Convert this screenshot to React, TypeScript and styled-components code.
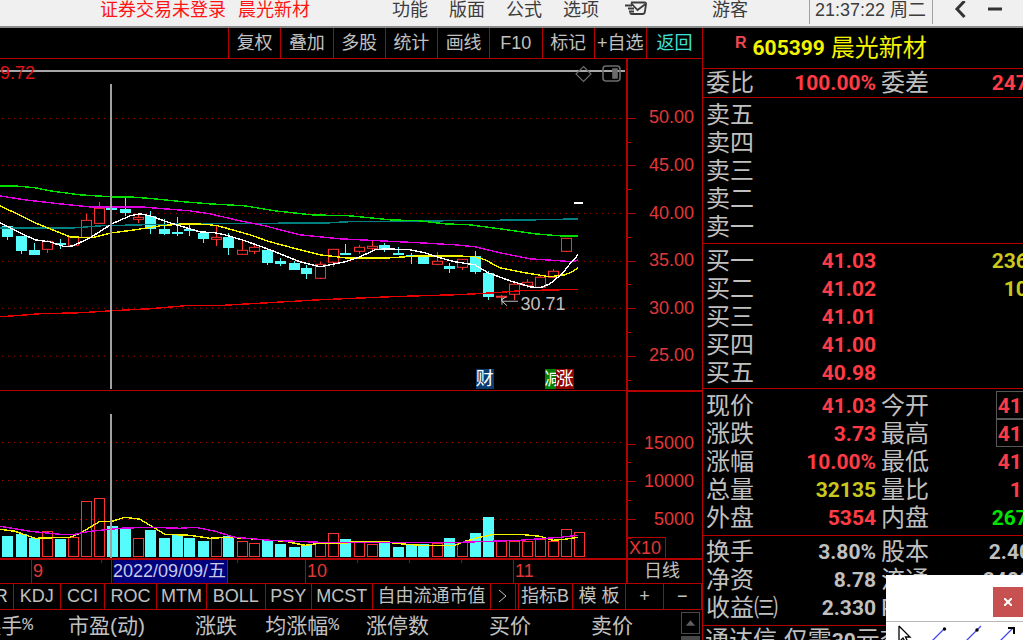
import React from 'react';
import styled, { createGlobalStyle } from 'styled-components';

const RED = '#b40000';
const CYAN = '#54fcfc';
const CANDLE = '#ff3232';
const SILVER = '#c0c0c0';

const Global = createGlobalStyle`
  *, *::before, *::after { box-sizing: border-box; }
  body {
    margin: 0;
    background: #000;
    color: ${SILVER};
    font-family: "Liberation Sans", "Noto Sans CJK SC", sans-serif;
    font-size: 18px;
  }
  button {
    font: inherit;
    color: inherit;
    background: none;
    border: 0;
    padding: 0;
    margin: 0;
    white-space: nowrap;
  }
  svg { display: block; }
`;

const Page = styled.div`
  position: relative;
  display: flex;
  flex-direction: column;
  height: 100vh;
  overflow: hidden;
`;

/* ---------- title bar ---------- */

const TitleBar = styled.header`
  display: flex;
  align-items: flex-start;
  flex: none;
  height: 28px;
  padding-left: 100px;
  background: #f0f0f0;
  border-bottom: 2px solid #8c8c8c;
  color: #3c3c3c;
  line-height: 20px;
  white-space: nowrap;
  overflow: hidden;
`;

const Status = styled.div`
  display: flex;
  flex: 1;
  gap: 12px;
  color: #ff1414;
`;

const Menu = styled.nav`
  display: flex;
  gap: 21px;
`;

const MailButton = styled.button`
  margin: 0 64px 0 26px;
  height: 18px;
`;

const Clock = styled.time`
  height: 24px;
  margin-left: 61px;
  padding: 0 6px 0 5px;
  border: solid #a0a0a0;
  border-width: 0 1px;
`;

const WindowButtons = styled.div`
  display: flex;
  gap: 20px;
  padding: 1px 20px 0 21px;
`;

/* ---------- main layout ---------- */

const Body = styled.main`
  display: grid;
  grid-template-columns: minmax(0, 1fr) 321px;
  flex: 1;
  min-height: 0;
`;

const ChartSide = styled.section`
  display: flex;
  flex-direction: column;
  min-width: 0;
  min-height: 0;
  overflow: hidden;
`;

const Toolbar = styled.div`
  display: grid;
  grid-template-columns: repeat(8, 1fr) 56px;
  flex: none;
  align-self: stretch;
  height: 31px;
  padding-left: calc(100% - 474px);
  border-bottom: 1px solid ${RED};
`;

const ToolButton = styled.button<{ $active?: boolean }>`
  border-left: 1px solid ${RED};
  line-height: 30px;
  color: ${(p) => (p.$active ? '#40e0d8' : SILVER)};
`;

const Pane = styled.div<{ $grow: number }>`
  display: grid;
  grid-template-columns: minmax(0, 1fr) 76px;
  flex: ${(p) => p.$grow} 1 0;
  min-height: 0;
  border-bottom: 1px solid ${RED};
`;

const Plot = styled.div`
  position: relative;
  min-height: 0;
  overflow: hidden;
  > svg:first-child { width: 100%; height: 100%; }
`;

const Axis = styled.div<{ $boxed?: boolean }>`
  position: relative;
  display: flex;
  flex-direction: column;
  min-height: 0;
  padding: ${(p) => (p.$boxed ? '33px 8px 20px 0' : '35px 8px 10px 0')};
  border-left: 2px solid ${RED};
  border-top: ${(p) => (p.$boxed ? `1px solid ${RED}` : '0')};
  color: #e03838;
`;

const AxisLabel = styled.div`
  position: relative;
  display: flex;
  flex: 1;
  align-items: center;
  justify-content: flex-end;
  &::before, &::after {
    content: '';
    position: absolute;
    left: 0;
    height: 1px;
    background: ${RED};
  }
  &::before { top: 50%; width: 8px; }
  &::after { top: 100%; width: 3px; }
`;

const Unit = styled.div`
  position: absolute;
  left: 0;
  bottom: 0;
  height: 21px;
  padding: 0 4px 0 1px;
  border: solid ${RED};
  border-width: 1px 1px 0 0;
  line-height: 20px;
`;

const PlotIcons = styled.div`
  position: absolute;
  top: 6px;
  right: 5px;
  display: flex;
  gap: 10px;
`;

const TopValue = styled.span`
  position: absolute;
  top: 4px;
  left: 0;
  color: #e01414;
  line-height: 20px;
`;

const LowValue = styled.span`
  position: absolute;
  left: 83%;
  top: 71%;
  padding-left: 1px;
  line-height: 20px;
`;

const Markers = styled.div<{ $left: string }>`
  position: absolute;
  left: ${(p) => p.$left};
  bottom: 1px;
  display: flex;
  color: #fff;
  line-height: 20px;
`;

const Marker = styled.span<{ $bg: string; $clipped?: boolean }>`
  width: ${(p) => (p.$clipped ? '11px' : 'auto')};
  height: 20px;
  overflow: hidden;
  background: ${(p) => p.$bg};
`;

const DateRow = styled.div`
  display: grid;
  grid-template-columns: minmax(0, 1fr) 76px;
  flex: none;
  height: 25px;
  border-top: 1px solid ${RED};
  border-bottom: 1px solid ${RED};
  line-height: 23px;
`;

const Dates = styled.div`
  position: relative;
  display: grid;
  grid-template-columns: 31fr 80fr 194fr 208fr 113fr;
  color: #e03838;
  > svg { position: absolute; top: 0; left: 0; width: 100%; height: 4px; }
`;

const DateCell = styled.div`
  padding-left: 1px;
  border-left: 1px solid ${RED};
  white-space: nowrap;
  &:first-child { border-left: 0; }
`;

const SelectedDate = styled.span`
  display: inline-block;
  padding-right: 1px;
  border-right: 1px solid ${RED};
  background: #00007c;
  color: #c8c8e8;
`;

const Period = styled.button`
  padding-right: 6px;
  border-left: 2px solid ${RED};
`;

const IndicatorRow = styled.div`
  display: flex;
  flex: none;
  height: 26px;
  border-bottom: 1px solid ${RED};
`;

const Indicator = styled.button<{ $w: number; $end?: boolean }>`
  display: flex;
  justify-content: ${(p) => (p.$end ? 'flex-end' : 'center')};
  flex: ${(p) => p.$w} 1 0;
  min-width: 0;
  padding-right: ${(p) => (p.$end ? 5 : 0)}px;
  overflow: hidden;
  border-right: 1px solid ${RED};
  line-height: 25px;
`;

const TableBar = styled.div`
  display: flex;
  flex: none;
  height: 30px;
`;

const HeadWrap = styled.div`
  flex: 1;
  min-width: 0;
`;

const HeadTable = styled.table`
  width: 100%;
  table-layout: fixed;
  border-collapse: collapse;
  font-size: 21px;
  line-height: 31px;
`;

const Th = styled.th<{ $w: number }>`
  width: ${(p) => p.$w}px;
  padding: 0;
  font-weight: 400;
  white-space: nowrap;
`;

const ThText = styled.div`
  display: flex;
  justify-content: flex-end;
`;

const Percent = styled.span`
  font-family: "Liberation Mono", monospace;
  font-size: 18px;
`;

const Scroller = styled.div`
  width: 21px;
  padding: 2px 2px 0 0;
`;

const ScrollButton = styled.button`
  display: block;
  width: 19px;
  height: 22px;
  padding: 6px 3px;
  border: 1px solid #484848;
`;

const Thumb = styled.div`
  height: 4px;
  margin-top: 2px;
  background: #484848;
`;

/* ---------- quote panel ---------- */

const Quote = styled.aside`
  display: flex;
  flex-direction: column;
  min-width: 0;
  overflow: hidden;
  border-left: 1px solid ${RED};
  font-size: 24px;
  line-height: 28px;
`;

const StockTitle = styled.h1`
  display: flex;
  flex: none;
  gap: 6px;
  height: 41px;
  margin: 0;
  padding: 6px 0 0 32px;
  border-bottom: 1px solid ${RED};
  color: #f4f400;
  font-size: 24px;
  font-weight: 400;
  white-space: nowrap;
`;

const Tag = styled.sup`
  font-size: 16px;
  font-weight: 700;
  line-height: 18px;
  color: #f04850;
`;

const Code = styled.span`
  font-family: Roboto, sans-serif;
  font-size: 21px;
  font-weight: 700;
`;

const Group = styled.dl<{ $top: number; $bottom: number }>`
  flex: none;
  margin: 0;
  padding: ${(p) => p.$top}px 0 ${(p) => p.$bottom}px 3px;
  border-bottom: 1px solid ${RED};
`;

const Row = styled.div`
  display: grid;
  grid-template-columns: 72px 99px 4px 110px 62px;
  height: 28px;
  white-space: nowrap;
`;

const Label = styled.dt<{ $second?: boolean }>`
  grid-column: ${(p) => (p.$second ? 4 : 1)};
`;

const Value = styled.dd<{ $color: string; $second?: boolean; $framed?: boolean }>`
  grid-column: ${(p) => (p.$second ? 5 : 2)};
  justify-self: end;
  height: 26px;
  margin: 0;
  padding: 0 1px;
  outline: ${(p) => (p.$framed ? '1px solid #585858' : 'none')};
  color: ${(p) => p.$color};
  font-family: Roboto, "Noto Sans CJK SC", sans-serif;
  font-size: 21px;
  font-weight: 700;
`;

const Ticker = styled.p`
  flex: none;
  margin: 0;
  padding-left: 2px;
  white-space: nowrap;
`;

/* ---------- floating drawing palette ---------- */

const Palette = styled.div`
  position: absolute;
  right: 0;
  bottom: 0;
  width: 137px;
  height: 65px;
  padding-top: 12px;
  background: #fff;
`;

const CloseButton = styled.button`
  display: block;
  width: 30px;
  height: 30px;
  margin-left: auto;
  padding: 11px;
  background: #c75050;
`;

const Tools = styled.div`
  display: flex;
  gap: 10px;
  margin-top: 4px;
  padding: 3px 0 0 8px;
  border-top: 1px solid #b8b8b8;
`;

/* ---------- data ---------- */

type Kind = 'up' | 'down';
// x, body top, body bottom, high, low, kind
const candles: [number, number, number, number, number, Kind][] = [
  [7, 226, 236, 226, 239, 'down'], [21, 236, 250, 236, 253, 'down'],
  [34, 250, 254, 243, 254, 'down'], [47, 241, 249, 240, 252, 'up'],
  [60, 243, 244, 239, 248, 'down'], [73, 237, 245, 237, 245, 'up'],
  [86, 220, 237, 214, 237, 'up'], [99, 208, 223, 202, 223, 'up'],
  [111, 207, 209, 207, 209, 'down'], [125, 209, 212, 196, 215, 'down'],
  [138, 217, 219, 214, 222, 'up'], [150, 216, 228, 211, 233, 'down'],
  [164, 229, 233, 219, 234, 'down'], [177, 232, 233, 217, 235, 'down'],
  [189, 229, 230, 225, 235, 'down'], [203, 233, 238, 232, 242, 'down'],
  [216, 237, 239, 225, 245, 'up'], [228, 237, 247, 233, 254, 'down'],
  [242, 250, 254, 240, 254, 'up'], [254, 247, 251, 244, 253, 'up'],
  [267, 250, 262, 248, 264, 'down'], [280, 261, 263, 258, 265, 'down'],
  [294, 263, 269, 261, 269, 'down'], [306, 268, 273, 265, 278, 'down'],
  [320, 264, 278, 262, 278, 'up'], [333, 249, 262, 249, 266, 'up'],
  [345, 253, 254, 244, 254, 'down'], [359, 247, 251, 245, 253, 'up'],
  [372, 246, 248, 241, 251, 'up'], [384, 245, 249, 243, 251, 'down'],
  [398, 253, 254, 247, 254, 'down'], [411, 255, 256, 253, 263, 'down'],
  [423, 257, 263, 255, 263, 'down'], [437, 261, 264, 252, 264, 'up'],
  [449, 266, 268, 263, 272, 'down'], [462, 259, 267, 259, 269, 'up'],
  [475, 256, 271, 251, 273, 'down'], [488, 273, 296, 271, 299, 'down'],
  [501, 296, 297, 295, 300, 'up'], [514, 284, 294, 283, 299, 'up'],
  [527, 282, 285, 279, 287, 'up'], [540, 277, 287, 275, 287, 'up'],
  [553, 271, 277, 269, 277, 'up'], [566, 238, 251, 238, 251, 'up'],
];

// x, top, kind
const volumes: [number, number, Kind][] = [
  [7, 536, 'down'], [21, 534, 'down'], [34, 538, 'down'], [47, 531, 'up'],
  [60, 539, 'down'], [73, 537, 'up'], [86, 501, 'up'], [99, 498, 'up'],
  [112, 526, 'down'], [125, 529, 'down'], [138, 538, 'up'], [150, 530, 'down'],
  [164, 538, 'down'], [177, 534, 'down'], [189, 538, 'down'], [203, 541, 'down'],
  [216, 537, 'up'], [228, 536, 'down'], [242, 541, 'up'], [254, 543, 'up'],
  [267, 540, 'down'], [280, 544, 'down'], [294, 547, 'down'], [306, 545, 'down'],
  [320, 543, 'up'], [333, 533, 'up'], [345, 539, 'down'], [359, 542, 'up'],
  [372, 544, 'up'], [384, 542, 'down'], [398, 547, 'down'], [411, 544, 'down'],
  [423, 544, 'down'], [437, 543, 'up'], [449, 538, 'down'], [462, 542, 'up'],
  [475, 533, 'down'], [488, 517, 'down'], [501, 541, 'up'], [514, 541, 'up'],
  [527, 541, 'up'], [540, 539, 'up'], [553, 541, 'up'], [566, 529, 'up'],
  [579, 532, 'up'],
];

const averages: [string, string][] = [
  ['#e80000', '0,317 15,316 40,314 80,313 112,311 150,309 185,306 215,306 250,304 320,300 390,297 420,296 456,295 495,293 520,291 560,290 578,290'],
  ['#008080', '0,228 75,228 100,226 140,225 190,224 330,223 345,222 440,221 535,220 578,219'],
  ['#00e000', '0,186 15,186 36,188 50,191 80,195 112,197 130,197 155,199 185,202 210,204 245,206 275,211 312,215 350,216 390,220 420,221 445,224 470,225 500,229 535,234 560,236 578,236'],
  ['#e000e0', '0,196 25,200 60,204 90,207 140,207 165,209 190,211 210,214 240,221 265,226 300,235 340,239 380,241 420,243 455,245 475,247 500,253 530,259 560,261 573,262 578,260'],
  ['#f4f400', '0,206 15,213 35,223 55,231 70,237 92,238 112,233 135,230 160,226 183,224 196,224 210,225 218,226 250,235 270,242 300,250 320,255 345,258 390,258 420,256 455,256 475,257 485,260 500,268 525,273 550,277 565,275 572,272 578,268'],
  ['#ffffff', '0,223 20,233 35,240 50,242 65,247 73,246 90,238 112,224 130,216 140,214 150,216 170,223 180,226 200,232 215,233 225,235 245,241 270,250 300,262 320,267 345,262 360,257 375,250 385,249 410,250 425,253 440,258 455,262 475,265 488,273 510,281 530,287 540,288 550,284 562,274 570,264 578,255'],
];

const volumeAverages: [string, string][] = [
  ['#f4f400', '0,529 15,531 35,538 70,537 80,533 100,521 112,521 125,517 140,519 150,525 165,534 190,535 210,538 228,537 245,538 270,540 285,541 305,545 320,543 345,543 353,541 385,541 395,543 420,545 455,545 465,541 480,537 495,534 520,534 540,536 553,540 565,539 578,537'],
  ['#e000e0', '0,526 30,531 60,534 75,534 90,531 120,528 150,527 180,528 195,527 215,531 235,537 270,540 320,542 390,542 430,542 460,542 490,541 520,540 560,537 578,535'],
];

const prices = ['50.00', '45.00', '40.00', '35.00', '30.00', '25.00'];
const gridLines = [118, 165, 213, 261, 308, 356];

const indicators: [string, number][] = [
  ['WR', 8], ['KDJ', 47], ['CCI', 44], ['ROC', 52], ['MTM', 50], ['BOLL', 59],
  ['PSY', 46], ['MCST', 61], ['自由流通市值', 120], ['', 2], ['指标B', 54], ['模 板', 54], ['+', 37], ['−', 38],
];

const columns: [string, boolean, number][] = [
  ['换手', true, 33], ['市盈(动)', false, 112], ['涨跌', false, 92], ['均涨幅', true, 102],
  ['涨停数', false, 90], ['买价', false, 102], ['卖价', false, 102], ['', false, 48],
];

type Entry = { label: string; value?: string; color?: string; label2?: string; value2?: string; color2?: string; framed?: boolean };
const UP = '#ff3c46';
const OLIVE = '#c8c81e';
const GREEN = '#00e400';

const groups: { top: number; bottom: number; rows: Entry[] }[] = [
  { top: 0, bottom: 0, rows: [{ label: '委比', value: '100.00%', color: UP, label2: '委差', value2: '24700', color2: UP }] },
  {
    top: 3, bottom: 2,
    rows: [{ label: '卖五' }, { label: '卖四' }, { label: '卖三' }, { label: '卖二' }, { label: '卖一' }],
  },
  {
    top: 3, bottom: 1,
    rows: [
      { label: '买一', value: '41.03', color: UP, value2: '23600', color2: OLIVE },
      { label: '买二', value: '41.02', color: UP, value2: '1000', color2: OLIVE },
      { label: '买三', value: '41.01', color: UP },
      { label: '买四', value: '41.00', color: UP },
      { label: '买五', value: '40.98', color: UP },
    ],
  },
  {
    top: 3, bottom: 3,
    rows: [
      { label: '现价', value: '41.03', color: UP, label2: '今开', value2: '41.03', color2: UP, framed: true },
      { label: '涨跌', value: '3.73', color: UP, label2: '最高', value2: '41.03', color2: UP, framed: true },
      { label: '涨幅', value: '10.00%', color: UP, label2: '最低', value2: '41.03', color2: UP },
      { label: '总量', value: '32135', color: OLIVE, label2: '量比', value2: '1.00', color2: UP },
      { label: '外盘', value: '5354', color: UP, label2: '内盘', value2: '26781', color2: GREEN },
    ],
  },
  {
    top: 2, bottom: 3,
    rows: [
      { label: '换手', value: '3.80%', color: SILVER, label2: '股本', value2: '2.40亿', color2: SILVER },
      { label: '净资', value: '8.78', color: SILVER, label2: '流通', value2: '2400万', color2: SILVER },
      { label: '收益㈢', value: '2.330', color: SILVER, label2: 'PE(动)' },
    ],
  },
];

/* ---------- charts ---------- */

const PriceChart = () => (
  <svg viewBox="0 59 626 331" preserveAspectRatio="none" shapeRendering="crispEdges" fill="none">
    {gridLines.map((y) => (
      <path key={y} d={`M2 ${y + 0.5}H624`} stroke="#b40000" strokeDasharray="1 5" />
    ))}
    <path d="M0 71H625" stroke="#a8a8a8" strokeWidth="1.5" />
    {candles.map(([x, top, bottom, high, low, kind]) => {
      const color = kind === 'up' ? CANDLE : CYAN;
      return (
        <g key={x} stroke={color}>
          <path d={`M${x + 0.5} ${high}V${top}M${x + 0.5} ${bottom}V${low + 1}`} strokeWidth="1.5" />
          {kind === 'up' ? (
            <rect x={x - 4.5} y={top + 0.5} width="10" height={Math.max(bottom - top, 1)} />
          ) : (
            <rect x={x - 5} y={top} width="11" height={bottom - top + 1} fill={color} stroke="none" />
          )}
        </g>
      );
    })}
    {averages.map(([color, points]) => (
      <polyline key={color} points={points} stroke={color} strokeWidth="1.4" />
    ))}
    <path d="M574 203H583" stroke="#fff" strokeWidth="2" />
    <path d="M111 84V389" stroke="#a0a0a0" strokeWidth="2" />
    <path d="M518 301.500H502M507 306L501 300.500L506 297M502 298V305" stroke={SILVER} />
  </svg>
);

const VolumeChart = () => (
  <svg viewBox="0 391 626 167" preserveAspectRatio="none" shapeRendering="crispEdges" fill="none">
    {[442, 480, 519].map((y) => (
      <path key={y} d={`M2 ${y + 0.5}H624`} stroke="#b40000" strokeDasharray="1 5" />
    ))}
    {volumes.map(([x, top, kind]) =>
      kind === 'up' ? (
        <rect key={x} x={x - 4.5} y={top + 0.5} width="10" height={556 - top} stroke={CANDLE} />
      ) : (
        <rect key={x} x={x - 5} y={top} width="11" height={557 - top} fill={CYAN} />
      ),
    )}
    {volumeAverages.map(([color, points]) => (
      <polyline key={color} points={points} stroke={color} strokeWidth="1.4" />
    ))}
    <path d="M111 414V558" stroke="#a0a0a0" strokeWidth="2" />
  </svg>
);

const MailIcon = () => (
  <svg width="23" height="18" viewBox="0 0 23 18" fill="none" stroke="#3c3c3c" strokeWidth="1.800">
    <path d="M6 2.500H19.500Q21.500 2.500 21 4.500L19.800 12Q19.500 14 17.500 14H7Q5 14 5.500 12.500" />
    <path d="M6 3L12.500 10L20.500 4M0 5.500H7M3 8.500H9M4 11.500H9" />
  </svg>
);

export default function App() {
  return (
    <>
      <Global />
      <Page>
        <TitleBar>
          <Status>
            <span>证券交易未登录</span>
            <span>晨光新材</span>
          </Status>
          <Menu>
            {['功能', '版面', '公式', '选项'].map((item) => (
              <button key={item}>{item}</button>
            ))}
          </Menu>
          <MailButton aria-label="Mail"><MailIcon /></MailButton>
          <button>游客</button>
          <Clock>21:37:22 周二</Clock>
          <WindowButtons>
            <button aria-label="Back">
              <svg width="14" height="18" viewBox="0 0 14 18" fill="none" stroke="#333" strokeWidth="3">
                <path d="M10.500 0L3 8L10.500 16" />
              </svg>
            </button>
            <button aria-label="Minimize">
              <svg width="15" height="18" viewBox="0 0 15 18" fill="#333"><path d="M0 6.500H14V9.500H0z" /></svg>
            </button>
          </WindowButtons>
        </TitleBar>
        <Body>
          <ChartSide>
            <Toolbar>
              {['复权', '叠加', '多股', '统计', '画线', 'F10', '标记', '+自选', '返回'].map((t) => (
                <ToolButton key={t} $active={t === '返回'}>{t}</ToolButton>
              ))}
            </Toolbar>
            <Pane $grow={332}>
              <Plot>
                <PriceChart />
                <TopValue>9.72</TopValue>
                <PlotIcons>
                  <svg width="17" height="18" viewBox="0 0 17 18" fill="none" stroke="#6c6c6c" strokeWidth="1.200">
                    <path d="M8.500 1.500L16 9L8.500 16.500L1 9z" />
                  </svg>
                  <svg width="19" height="18" viewBox="0 0 19 18" fill="none" stroke="#6c6c6c" strokeWidth="1.600">
                    <rect x="1" y="1" width="17" height="15" rx="3" />
                    <path d="M11 4H15V13H11z" fill="#6c6c6c" />
                  </svg>
                </PlotIcons>
                <LowValue>30.71</LowValue>
                <Markers $left="76%">
                  <Marker $bg="#0c3c70">财</Marker>
                </Markers>
                <Markers $left="87%">
                  <Marker $bg="#008000" $clipped>减</Marker>
                  <Marker $bg="#900000">涨</Marker>
                </Markers>
              </Plot>
              <Axis>
                {prices.map((p) => <AxisLabel key={p}>{p}</AxisLabel>)}
              </Axis>
            </Pane>
            <Pane $grow={168}>
              <Plot><VolumeChart /></Plot>
              <Axis $boxed>
                {['15000', '10000', '5000'].map((v) => <AxisLabel key={v}>{v}</AxisLabel>)}
                <Unit>X10</Unit>
              </Axis>
            </Pane>
            <DateRow>
              <Dates>
                <DateCell />
                <DateCell>9</DateCell>
                <DateCell><SelectedDate>2022/09/09/五</SelectedDate></DateCell>
                <DateCell>10</DateCell>
                <DateCell>11</DateCell>
                <svg viewBox="0 0 626 4" preserveAspectRatio="none" stroke={RED}>
                  <path d="M101.500 0V3M237.500 0V3M357.500 0V3M409.500 0V3M461.500 0V3" />
                </svg>
              </Dates>
              <Period>日线</Period>
            </DateRow>
            <IndicatorRow>
              {indicators.map(([name, w], i) =>
                name === '' ? (
                  <React.Fragment key="next">
                    <Indicator $w={24}>
                      <svg width="8" height="24" viewBox="0 0 8 24" fill="none" stroke={SILVER}><path d="M0 6L7 12L0 18" /></svg>
                    </Indicator>
                    <Indicator as="span" $w={2} />
                  </React.Fragment>
                ) : (
                  <Indicator key={name} $w={w} $end={i === 0}>{name}</Indicator>
                ),
              )}
            </IndicatorRow>
            <TableBar>
              <HeadWrap>
                <HeadTable>
                  <thead>
                    <tr>
                      {columns.map(([name, percent, w]) => (
                        <Th key={name} $w={w}>
                          <ThText>{name}{percent && <Percent>%</Percent>}</ThText>
                        </Th>
                      ))}
                    </tr>
                  </thead>
                </HeadTable>
              </HeadWrap>
              <Scroller>
                <ScrollButton aria-label="Scroll up">
                  <svg width="11" height="8" viewBox="0 0 12 8" fill="#606060"><path d="M6 1L11 7H1z" /></svg>
                </ScrollButton>
                <Thumb />
              </Scroller>
            </TableBar>
          </ChartSide>
          <Quote>
            <StockTitle>
              <Tag>R</Tag>
              <Code>605399</Code>
              <span>晨光新材</span>
            </StockTitle>
            {groups.map((g, i) => (
              <Group key={i} $top={g.top} $bottom={g.bottom}>
                {g.rows.map((r) => (
                  <Row key={r.label}>
                    <Label>{r.label}</Label>
                    {r.value && <Value $color={r.color!}>{r.value}</Value>}
                    {r.label2 && <Label $second>{r.label2}</Label>}
                    {r.value2 && <Value $second $framed={r.framed} $color={r.color2!}>{r.value2}</Value>}
                  </Row>
                ))}
              </Group>
            ))}
            <Ticker>通达信 仅需<Code>30</Code>元查</Ticker>
          </Quote>
        </Body>
        <Palette>
          <CloseButton aria-label="Close">
            <svg width="8" height="8" viewBox="0 0 8 8" stroke="#fff" strokeWidth="2"><path d="M0 0L8 8M8 0L0 8" /></svg>
          </CloseButton>
          <Tools>
            <button aria-label="Select">
              <svg width="24" height="20" viewBox="0 0 24 20" fill="none" stroke="#000" strokeWidth="1.300">
                <path d="M5 1V17L9 13L13 20M5 1L16 12H11.500L15 19" />
              </svg>
            </button>
            <button aria-label="Segment">
              <svg width="24" height="20" viewBox="0 0 24 20" stroke="#4848f0" strokeWidth="1.300">
                <path d="M3 17L16 4" /><circle cx="16.500" cy="4" r="1.700" fill="#000" stroke="none" />
              </svg>
            </button>
            <button aria-label="Line">
              <svg width="24" height="20" viewBox="0 0 24 20" stroke="#4848f0" strokeWidth="1.300">
                <path d="M3 17L19 1" /><circle cx="15" cy="5" r="1.700" fill="#000" stroke="none" />
              </svg>
            </button>
            <button aria-label="Arrow">
              <svg width="24" height="20" viewBox="0 0 24 20" fill="none" stroke="#4848f0" strokeWidth="1.300">
                <path d="M3 17L18 2" /><path d="M12 3H18V9" stroke="#000" strokeWidth="2" />
              </svg>
            </button>
          </Tools>
        </Palette>
      </Page>
    </>
  );
}
